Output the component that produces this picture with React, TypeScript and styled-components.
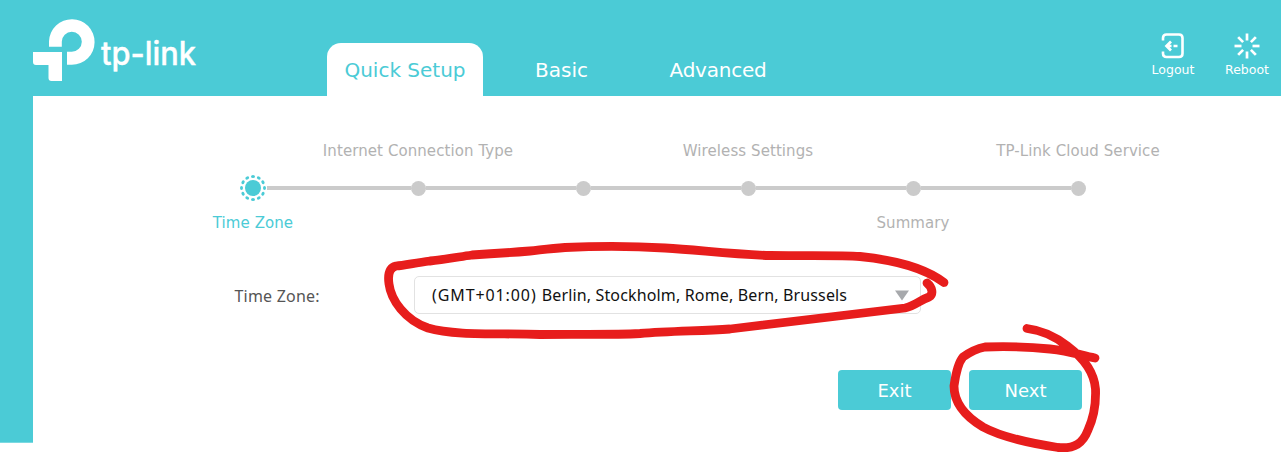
import React from 'react';
import styled, { createGlobalStyle } from 'styled-components';

const teal = '#4bcbd6';
const red = '#e71d1c';
const uiFont = '"DejaVu Sans", Verdana, sans-serif';
const fieldFont = '"Noto Sans", "Segoe UI", sans-serif';

const GlobalStyle = createGlobalStyle`
  *, *::before, *::after { box-sizing: border-box; }
  body { margin: 0; background: #fff; font-family: ${uiFont}; }
`;

const Page = styled.div`
  position: relative;
  width: 1281px;
  height: 453px;
  overflow: hidden;
  background: #fff;
`;

const Header = styled.header`
  display: flex;
  height: 96px;
  background: ${teal};
`;

const Brand = styled.div`
  width: 327px;
  padding: 18px 0 0 32px;
  svg { display: block; }
`;

const Tabs = styled.nav`
  display: flex;
  align-items: flex-end;
  flex: 1;
`;

const Tab = styled.a<{ $active?: boolean; $spacing?: number }>`
  width: 156px;
  height: 53px;
  margin-right: 0.5px;
  border-radius: 14px 14px 0 0;
  background: ${p => (p.$active ? '#fff' : 'transparent')};
  color: ${p => (p.$active ? teal : '#fff')};
  font-size: 20px;
  letter-spacing: ${p => p.$spacing ?? 0}px;
  line-height: 54px;
  text-align: center;
  white-space: nowrap;
`;

const Actions = styled.div`
  display: flex;
  padding: 32px 0 0;
`;

const Action = styled.a`
  display: flex;
  flex-direction: column;
  align-items: center;
  width: 74px;
  color: #fff;
  font-size: 12.5px;
  line-height: 19px;
  svg { display: block; }
  &:last-child { margin-right: -3px; }
`;

const Body = styled.div`
  display: flex;
`;

const Rail = styled.aside`
  width: 33px;
  height: 347px;
  background: ${teal};
  border-bottom: 1px solid #7bd9e1;
`;

const Main = styled.main`
  flex: 1;
  padding: 45px 0 0;
`;

const Steps = styled.ol`
  display: grid;
  grid-template-columns: repeat(6, 165px);
  margin: 0 0 0 137.5px;
  padding: 0;
  list-style: none;
`;

const Step = styled.li<{ $active?: boolean }>`
  display: grid;
  grid-template-columns: minmax(0, 1fr);
  grid-template-rows: 20px 52px 22px;
  justify-items: center;
  color: ${p => (p.$active ? teal : '#b2b2b2')};
  font-size: 15px;
  line-height: 20px;
  white-space: nowrap;
`;

const Label = styled.span<{ $row: number }>`
  grid-row: ${p => p.$row};
  grid-column: 1;
  letter-spacing: 0.08px;
`;

const Track = styled.span`
  grid-row: 2;
  grid-column: 1;
  display: grid;
  grid-template-columns: 1fr auto 1fr;
  align-items: center;
  width: 165px;
  padding-top: 2px;
`;

const Line = styled.span<{ $hidden?: boolean }>`
  height: 4px;
  background: ${p => (p.$hidden ? 'transparent' : '#cbcbcb')};
`;

const Dot = styled.span`
  width: 15px;
  height: 15px;
  margin-top: 1px;
  border-radius: 50%;
  background: #cbcbcb;
`;

const Field = styled.div`
  display: flex;
  align-items: center;
  margin: 41px 0 0 201px;
`;

const FieldLabel = styled.label`
  width: 180px;
  padding: 2px 0 0 0.5px;
  color: #555;
  font: 16px/24px ${fieldFont};
  letter-spacing: 0.2px;
`;

const Select = styled.div`
  display: flex;
  align-items: center;
  width: 507px;
  height: 38px;
  padding: 0 11px 0 17px;
  border: 1px solid #e2e2e2;
  border-radius: 5px;
  color: #111;
  font: 16px/24px ${fieldFont};
  letter-spacing: 0.15px;
  white-space: pre;
  svg { margin-left: auto; }
`;

const Offset = styled.span`
  letter-spacing: 0.9px;
`;

const Buttons = styled.div`
  display: flex;
  gap: 18px;
  margin: 56px 0 0 805px;
`;

const Button = styled.button`
  width: 113px;
  height: 40px;
  padding: 1px 0 0;
  border: 0;
  border-radius: 4px;
  background: ${teal};
  color: #fff;
  font: 18px/39px ${uiFont};
`;

const Markup = styled.svg`
  position: absolute;
  inset: 0;
  pointer-events: none;
`;

const steps = [
  { name: 'Time Zone', row: 3, active: true },
  { name: 'Internet Connection Type', row: 1 },
  { name: '', row: 3 },
  { name: 'Wireless Settings', row: 1 },
  { name: 'Summary', row: 3 },
  { name: 'TP-Link Cloud Service', row: 1 },
];

const Logo = () => (
  <svg width="170" height="70" viewBox="32 18 170 70" fill="#fff">
    <path d="M49 65V41.500A22.800 22.800 0 1 1 71.800 65H67V52H71.800A10 10 0 1 0 61.800 42V47H49Z" transform="translate(0 -.2)" />
    <path d="M33 52H62V81H51.500Q48.500 81 48.500 78V65H36Q33 65 33 62Z" />
    <text x="101" y="65.300" fontFamily="Inter, sans-serif" fontWeight="500" fontSize="32.500" textLength="95" lengthAdjust="spacingAndGlyphs" stroke="#fff" strokeWidth=".4">tp-link</text>
  </svg>
);

const LogoutIcon = () => (
  <svg width="28" height="28" viewBox="0 0 28 28" fill="none" stroke="#fff" strokeWidth="2.600">
    <path d="M4 8.500V6Q4 2.500 7.500 2.500H20Q23.500 2.500 23.500 6V21.500Q23.500 25 20 25H7.500Q4 25 4 21.500V19.500" />
    <path d="M12 9.500L7.500 14L12 18.500M7.500 14H12.500M14.500 14H18.500" strokeWidth="2.700" />
  </svg>
);

const RebootIcon = () => (
  <svg width="28" height="28" viewBox="-14 -14 28 28" stroke="#fff" strokeWidth="2.700">
    {[0, 45, 90, 135, 180, 225, 270, 315].map(a => (
      <path key={a} d="M0 -5.500V-12.500" transform={`rotate(${a})`} />
    ))}
  </svg>
);

const ActiveDot = () => (
  <svg width="28" height="26" viewBox="-14 -13 28 26">
    <circle r="8" fill={teal} />
    {Array.from({ length: 12 }, (_, i) => (
      <ellipse key={i} cy="-11.500" rx="2" ry="1.500" fill={teal} transform={`rotate(${i * 30})`} />
    ))}
  </svg>
);

export default function App() {
  return (
    <Page>
      <GlobalStyle />
      <Header>
        <Brand><Logo /></Brand>
        <Tabs>
          <Tab $active>Quick Setup</Tab>
          <Tab>Basic</Tab>
          <Tab $spacing={-0.25}>Advanced</Tab>
        </Tabs>
        <Actions>
          <Action><LogoutIcon />Logout</Action>
          <Action><RebootIcon />Reboot</Action>
        </Actions>
      </Header>
      <Body>
        <Rail />
        <Main>
          <Steps>
            {steps.map((s, i) => (
              <Step key={i} $active={s.active}>
                {s.name && <Label $row={s.row}>{s.name}</Label>}
                <Track>
                  <Line $hidden={i === 0} />
                  {s.active ? <ActiveDot /> : <Dot />}
                  <Line $hidden={i === steps.length - 1} />
                </Track>
              </Step>
            ))}
          </Steps>
          <Field>
            <FieldLabel>Time Zone:</FieldLabel>
            <Select>
              <span><Offset>(GMT+01:00) </Offset>Berlin, Stockholm, Rome, Bern, Brussels</span>
              <svg width="14" height="11" viewBox="0 0 14 11"><path d="M0 .5H14L7 10.500Z" fill="#a7a9ac" /></svg>
            </Select>
          </Field>
          <Buttons>
            <Button>Exit</Button>
            <Button>Next</Button>
          </Buttons>
        </Main>
      </Body>
      <Markup width="1281" height="453" fill="none" stroke={red} strokeWidth="8.800" strokeLinecap="round" strokeLinejoin="round">
        <path d="M944 282.500C925 268 895 260 860 256.500C840 255 800 256 770 255.500C730 254.500 700 250 665 248C640 246.500 600 246 565 247.500C550 248.500 540 250 530 251C505 253 490 254 472 255C452 258 440 260 430 261C415 263 405 265 396 266C388 268 388 277 389 284C391 300 405 320 428 328C455 336 500 333 540 334.500C580 334 610 335 640 333.500C670 331 700 331 730 329C790 322 850 315 905 308C915 306 920 300 929 297C934 294 932 287 927 283" />
        <path d="M1095 358C1080 355 1070 351 1050 349C1030 347 1010 346 985 347C975 349 970 352 963 357C957 364 955 379 954 386C954 405 968 418 983 427C1003 438 1035 444 1058 447.500C1075 449 1083 443 1088 430C1094 417 1096 402 1095.500 389C1094 370 1082 357 1068 346.500C1055 336 1040 330 1027 328.500" />
      </Markup>
    </Page>
  );
}
